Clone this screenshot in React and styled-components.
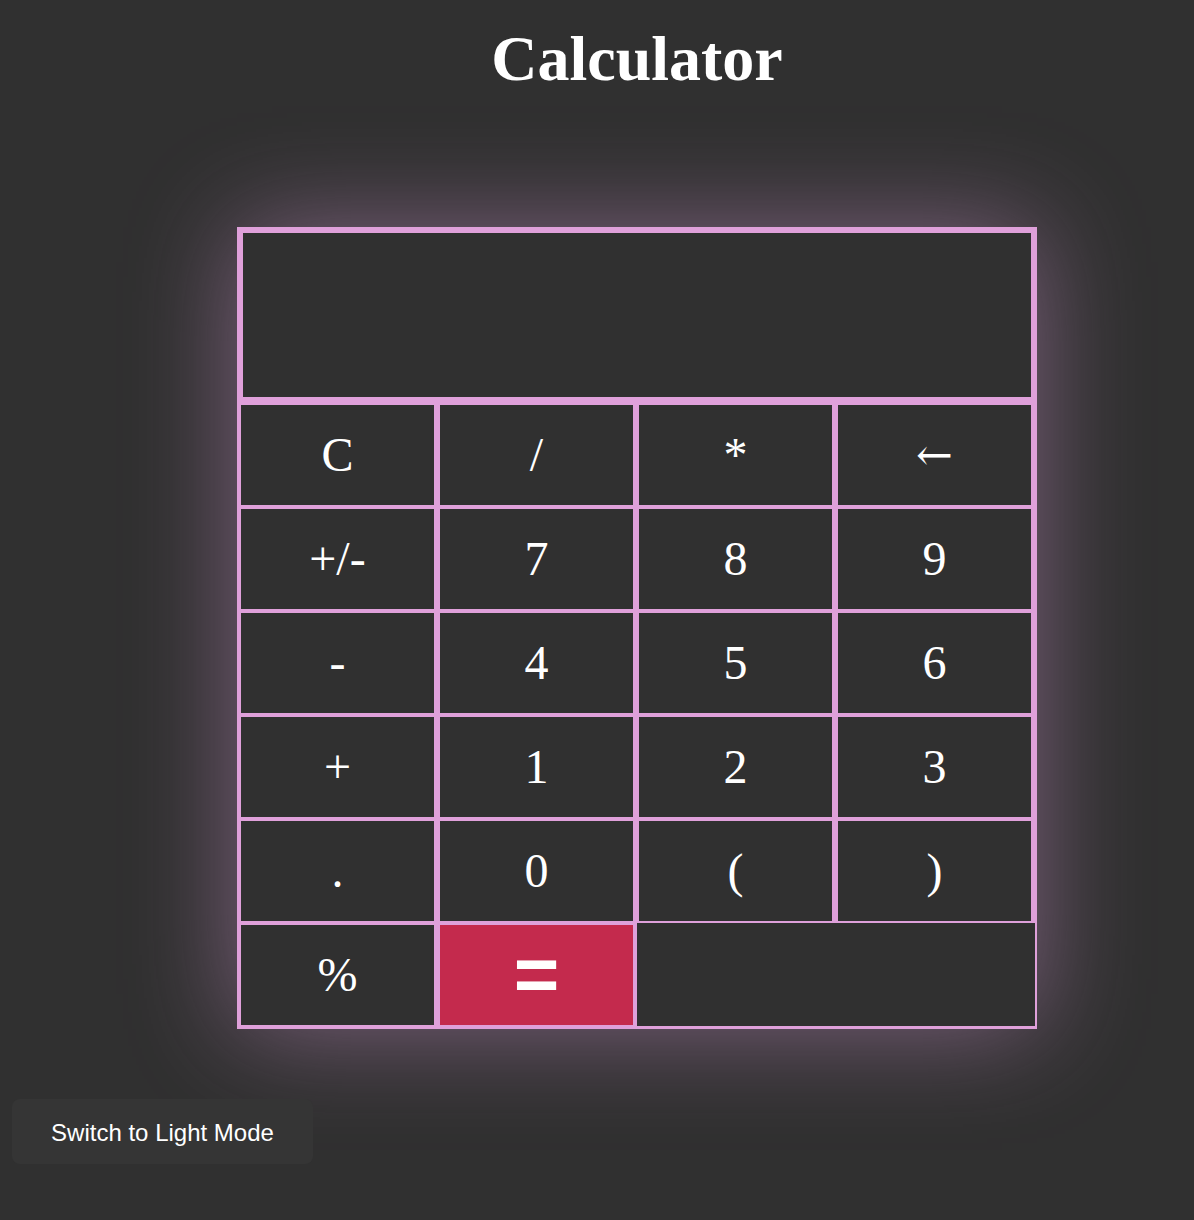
import React from 'react'
import styled, { createGlobalStyle } from 'styled-components'

const PINK = '#dfa0da'
const PAGE_BG = '#303030'

const GlobalStyle = createGlobalStyle`
  html, body {
    margin: 0;
    padding: 0;
    background: ${PAGE_BG};
  }
`

const Page = styled.div`
  min-height: 1220px;
  padding-left: 80px; /* content column is centred around x=637 */
  box-sizing: border-box;
  display: flex;
  flex-direction: column;
  align-items: center;
`

const Title = styled.h1`
  margin: 0;
  padding-top: 22px;
  font-family: 'Liberation Serif', 'Times New Roman', serif;
  font-weight: 700;
  font-size: 64px;
  line-height: 1.15;
  color: #fff;
  text-align: center;
`

const Calculator = styled.div`
  margin-top: 131px;
  width: 800px;
  box-sizing: border-box;
  padding: 6px 6px 4px 4px;
  background: ${PINK};
  box-shadow: 0 0 100px rgba(221, 160, 221, 0.45);
  display: flex;
  flex-direction: column;
`

const Display = styled.div`
  height: 164px;
  margin: 0 0 8px 2px;
  background: ${PAGE_BG};
`

const Keypad = styled.div`
  display: grid;
  grid-template-columns: repeat(4, 193px);
  grid-auto-rows: 100px;
  gap: 4px 6px;
`

const Key = styled.button`
  border: none;
  padding: 0;
  margin: 0;
  display: flex;
  align-items: center;
  justify-content: center;
  background: ${(p) => (p.$accent ? '#c42a4d' : PAGE_BG)};
  color: #fff;
  font-family: ${(p) =>
    p.$accent ? "'Liberation Sans', Arial, sans-serif" : "'Liberation Serif', 'Times New Roman', serif"};
  font-weight: ${(p) => (p.$accent ? 700 : 400)};
  font-size: ${(p) => (p.$accent ? '78px' : '48px')};
  cursor: pointer;
`

const Arrow = styled.span`
  font-family: 'DejaVu Serif', serif;
  font-size: 44px;
  line-height: 1;
  margin-top: 0;
`

const Filler = styled.div`
  grid-column: 3 / span 2;
  margin: -2px -4px -1px -2px;
  background: ${PAGE_BG};
`

const ModeToggle = styled.button`
  align-self: flex-start;
  margin: 70px 0 0 -68px;
  width: 301px;
  height: 65px;
  padding-top: 4px;
  border: none;
  border-radius: 8px;
  background: #353535;
  color: #fff;
  font-family: 'Liberation Sans', Arial, sans-serif;
  font-size: 24px;
  cursor: pointer;
`

const KEYS = ['C', '/', '*', '←', '+/-', '7', '8', '9', '-', '4', '5', '6', '+', '1', '2', '3', '.', '0', '(', ')', '%']

export default function App() {
  return (
    <>
      <GlobalStyle />
      <Page>
        <Title>Calculator</Title>
        <Calculator>
          <Display />
          <Keypad>
            {KEYS.map((k) => (
              <Key key={k}>{k === '←' ? <Arrow>{k}</Arrow> : k}</Key>
            ))}
            <Key $accent>=</Key>
            <Filler />
          </Keypad>
        </Calculator>
        <ModeToggle>Switch to Light Mode</ModeToggle>
      </Page>
    </>
  )
}
